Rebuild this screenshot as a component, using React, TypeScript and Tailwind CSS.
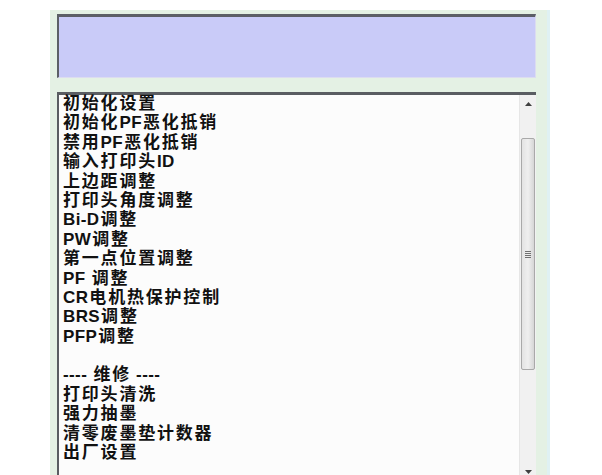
const ITEMS = [
  "初始化设置",
  "初始化PF恶化抵销",
  "禁用PF恶化抵销",
  "输入打印头ID",
  "上边距调整",
  "打印头角度调整",
  "Bi-D调整",
  "PW调整",
  "第一点位置调整",
  "PF 调整",
  "CR电机热保护控制",
  "BRS调整",
  "PFP调整",
  "",
  "---- 维修 ----",
  "打印头清洗",
  "强力抽墨",
  "清零废墨垫计数器",
  "出厂设置",
];

// latin runs are set tighter than the CJK glyphs
function Line({ text }: { text: string }) {
  const parts = text.split(/([A-Za-z\- ]+)/).filter(Boolean);
  return (
    <div className="h-[19.4px] whitespace-pre">
      {parts.map((p, i) =>
        /[A-Za-z\- ]/.test(p) ? (
          <span key={i} className="tracking-[0.4px] pr-[1px]">{p}</span>
        ) : (
          <span key={i} className="tracking-[1.8px]">{p}</span>
        )
      )}
    </div>
  );
}

export default function App() {
  return (
    <div className="w-[602px] h-[475px] bg-white overflow-hidden pt-[10px] pl-[50px]">
      <div className="w-[500px] h-[480px] bg-[#e4f1e4] border-r-[3px] border-[#dff1f3] pt-[4px] pl-[7px] flex flex-col">
        {/* status box */}
        <div className="w-[479px] h-[64px] bg-[#c9cbf8] border-t-[3px] border-l-[2px] border-[#5c5f66] border-b border-r border-b-[#dcdcf0] border-r-[#dcdcf0]" />

        {/* list */}
        <div className="mt-[14px] w-[479px] flex-1 bg-[#fcfcfc] border-t-[3px] border-l-[2px] border-[#5a5d62] flex">
          <div
            className="flex-1 pl-[4px] -mt-[1px] font-bold text-[17px] leading-[19.4px] text-[#111]"
            style={{ fontFamily: '"Liberation Sans", "Noto Sans CJK SC", sans-serif' }}
          >
            {ITEMS.map((t, i) => (
              <Line key={i} text={t} />
            ))}
          </div>

          {/* scrollbar */}
          <div className="w-[17px] bg-[#f1f1f1] border-l border-[#e6e6e6] flex flex-col">
            <div className="h-[17px] flex items-center justify-center">
              <svg width="7" height="4" viewBox="0 0 7 4">
                <path d="M0 4 L3.5 0 L7 4 Z" fill="#404040" />
              </svg>
            </div>
            <div className="h-[26px]" />
            <div className="h-[232px] mx-[1px] rounded-[2px] border border-[#a9a9a9] bg-gradient-to-r from-[#e3e3e3] via-[#efefef] to-[#d6d6d6] flex items-center justify-center">
              <div className="flex flex-col gap-[1px]">
                <div className="w-[6px] h-[1px] bg-[#707070]" />
                <div className="w-[6px] h-[1px] bg-[#707070]" />
                <div className="w-[6px] h-[1px] bg-[#707070]" />
                <div className="w-[6px] h-[1px] bg-[#707070]" />
              </div>
            </div>
            <div className="flex-1" />
            <div className="h-[17px] mb-[10px] flex items-center justify-center">
              <svg width="7" height="4" viewBox="0 0 7 4">
                <path d="M0 0 L3.5 4 L7 0 Z" fill="#404040" />
              </svg>
            </div>
          </div>
        </div>
      </div>
    </div>
  );
}
